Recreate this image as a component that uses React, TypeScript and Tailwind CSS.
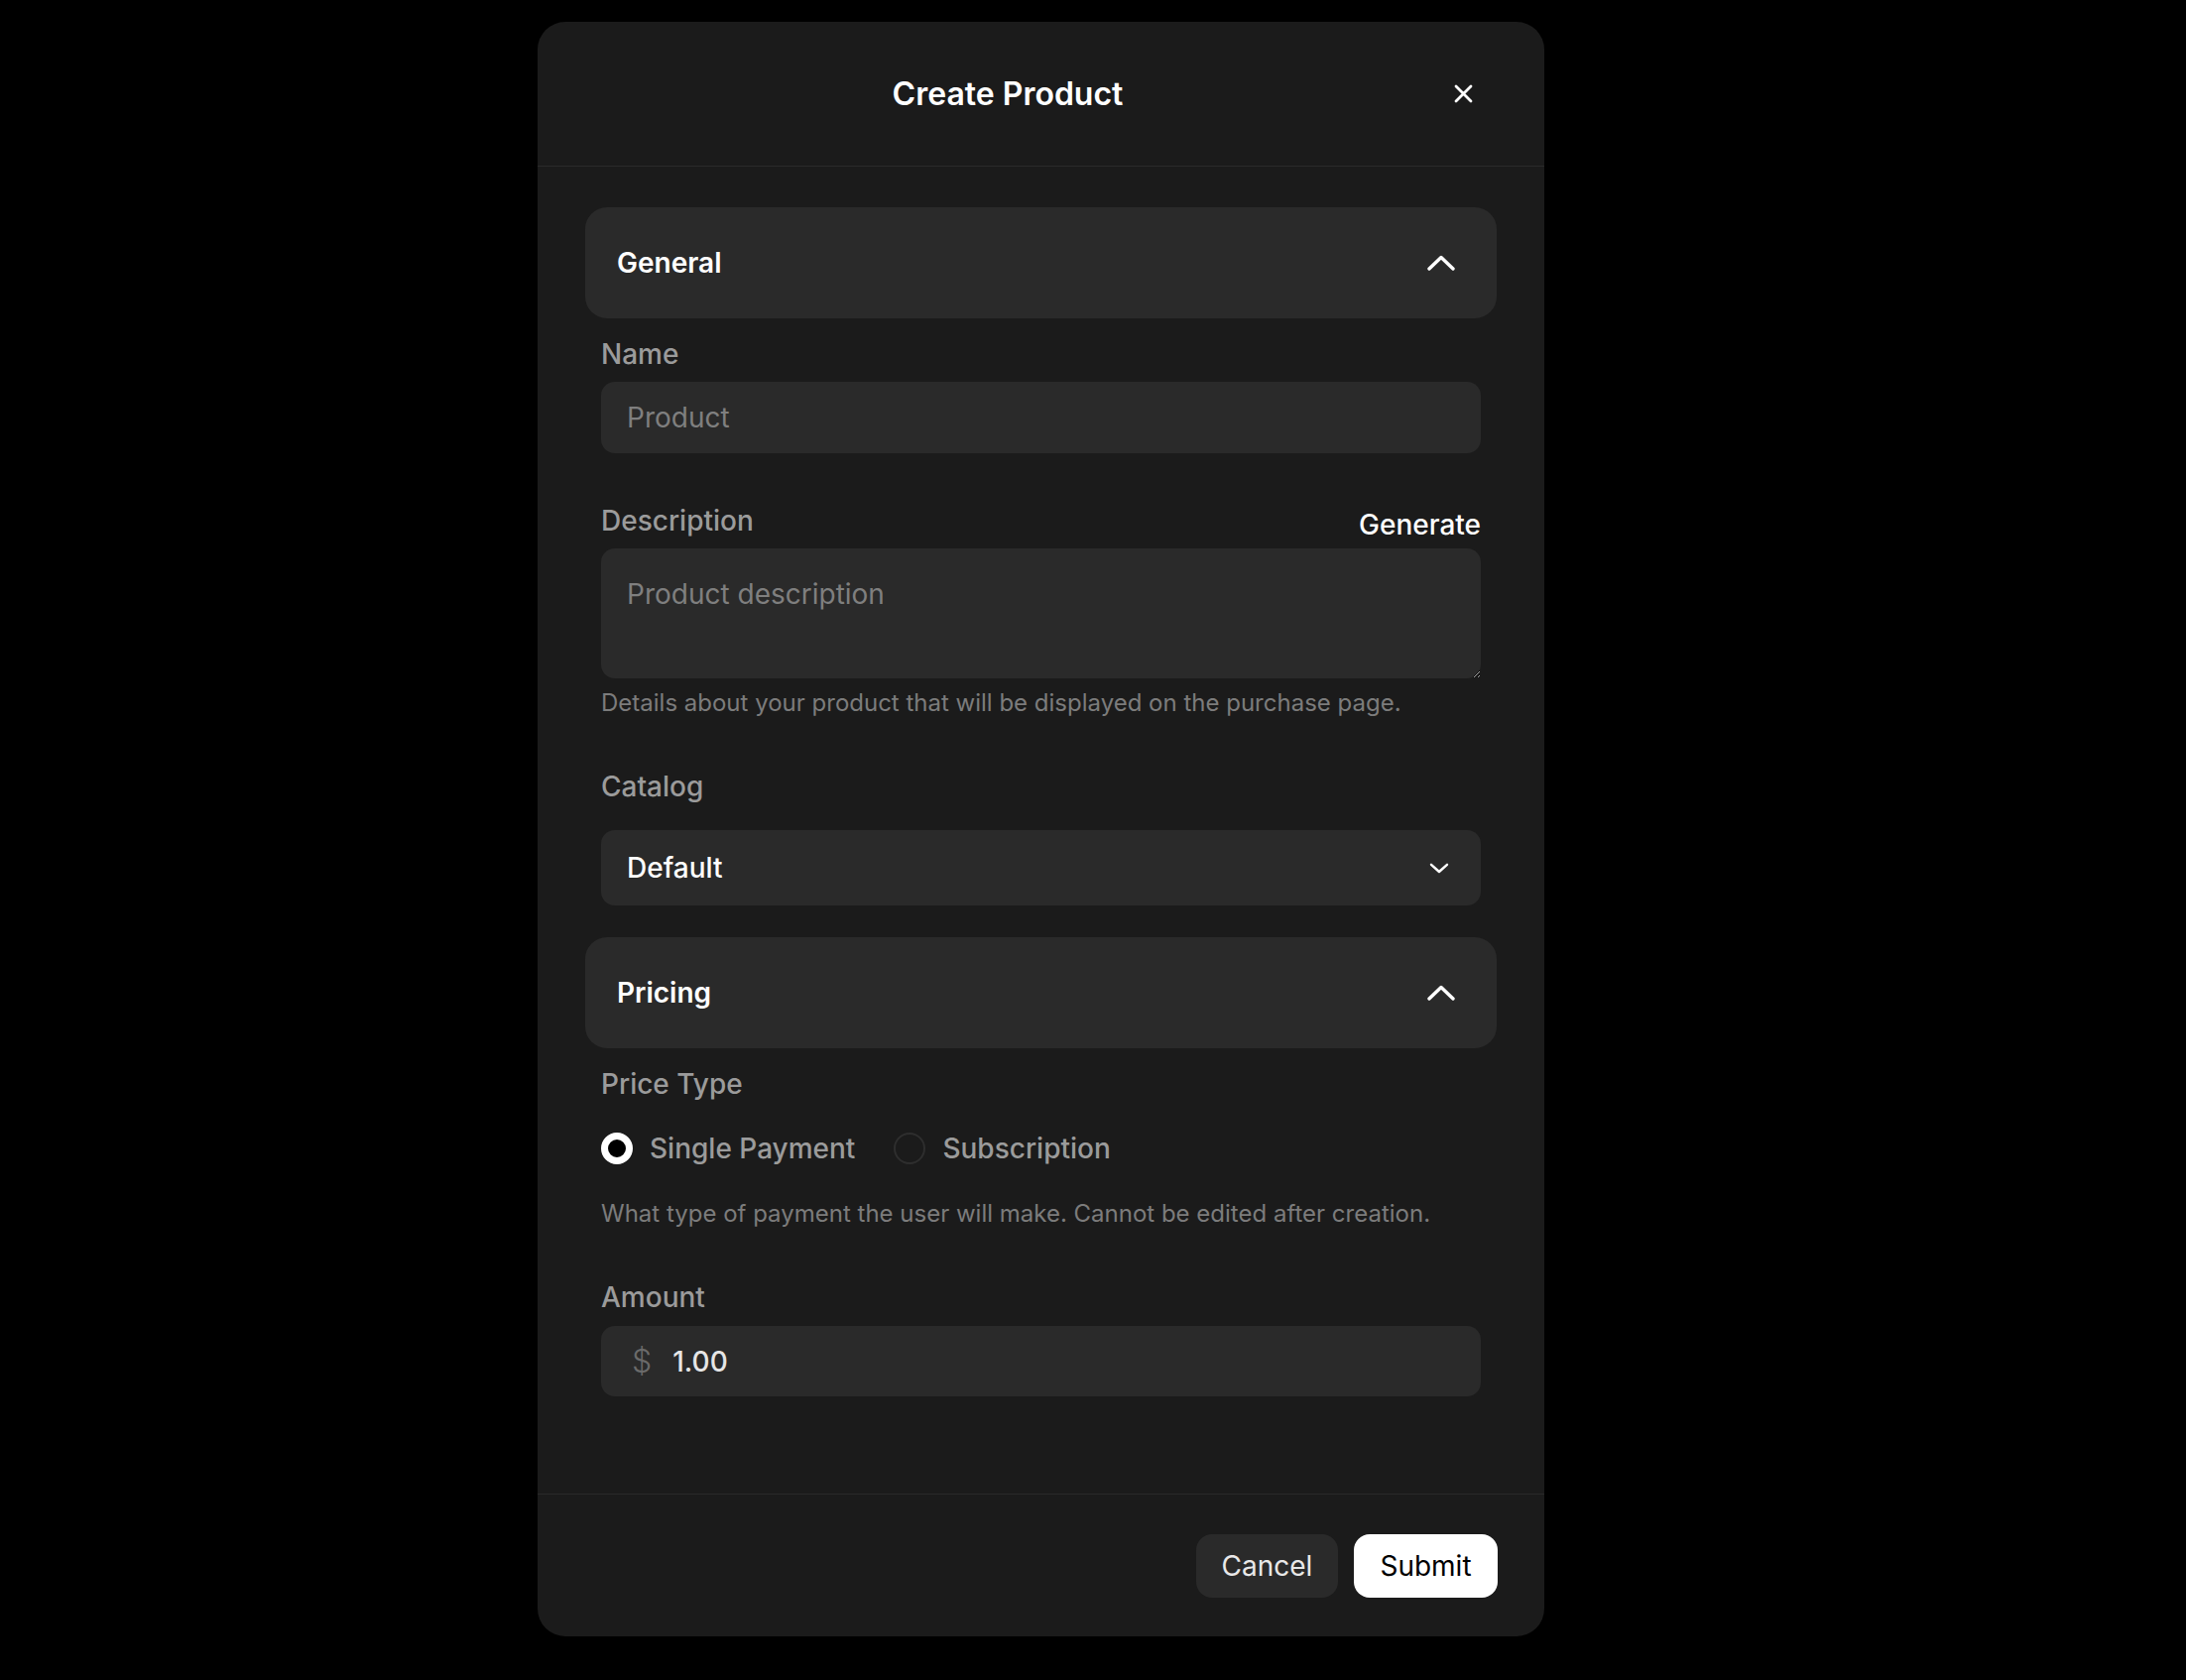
import { useState } from 'react';

const ChevronUp = () => (
  <svg width="28" height="16" viewBox="0 0 28 16" fill="none">
    <polyline points="2,14 14,2.5 26,14" stroke="white" strokeWidth="3.4" strokeLinecap="round" strokeLinejoin="round" />
  </svg>
);

const SectionHeader = ({ title }: { title: string }) => (
  <button className="w-full h-[112px] flex items-center justify-between rounded-[22px] bg-[#2a2a2a] pl-[32px] pr-[42px]">
    <span className="text-[28px] font-semibold text-white">{title}</span>
    <ChevronUp />
  </button>
);

const Label = ({ children }: { children: React.ReactNode }) => (
  <label className="block text-[28px] leading-[36px] font-medium text-[#9b9b9b]">{children}</label>
);

const Hint = ({ children, className }: { children: React.ReactNode; className?: string }) => (
  <p className={`text-[24px] leading-[32px] text-[#7c7c7c] ${className ?? ''}`}>{children}</p>
);

const Radio = ({ checked, label, onClick }: { checked: boolean; label: string; onClick: () => void }) => (
  <button onClick={onClick} className="flex items-center gap-[17px] h-[36px]">
    {checked ? (
      <span className="w-[32px] h-[32px] rounded-full border-[7px] border-white bg-black" />
    ) : (
      <span className="w-[32px] h-[32px] rounded-full border-2 border-[#2e2e2e]" />
    )}
    <span className="text-[28px] font-medium text-[#9b9b9b]">{label}</span>
  </button>
);

const App: React.FC = () => {
  const [priceType, setPriceType] = useState<'single' | 'sub'>('single');

  return (
    <div className="min-h-screen bg-black pl-[542px] pt-[22px] font-['Inter',sans-serif]">
      <div className="w-[1015px] h-[1628px] bg-[#1b1b1b] rounded-[28px] flex flex-col overflow-hidden">
        {/* header */}
        <div className="h-[146px] flex items-center border-b border-[#2a2a2a] pl-[33px] pr-[64px]">
          <h2 className="flex-1 text-center text-[32px] font-semibold text-white">Create Product</h2>
          <button className="w-[36px] h-[36px] flex items-center justify-center">
            <svg width="19" height="19" viewBox="0 0 19 19" fill="none">
              <path d="M2 2L17 17M17 2L2 17" stroke="white" strokeWidth="2.8" strokeLinecap="round" />
            </svg>
          </button>
        </div>

        {/* body */}
        <div className="flex-1 px-[48px] pt-[41px]">
          <SectionHeader title="General" />
          <div className="px-[16px]">
            <div className="mt-[18px]">
              <Label>Name</Label>
              <input
                placeholder="Product"
                className="mt-[10px] w-full h-[72px] rounded-[14px] bg-[#2a2a2a] px-[26px] text-[28px] text-white placeholder:text-[#7f7f7f] outline-none"
              />
            </div>
            <div className="mt-[50px]">
              <div className="h-[36px] flex items-start justify-between">
                <Label>Description</Label>
                <button className="mt-[4px] text-[28px] leading-[36px] font-medium text-white">Generate</button>
              </div>
              <textarea
                placeholder="Product description"
                className="mt-[10px] block w-full h-[131px] rounded-[14px] bg-[#2a2a2a] px-[26px] pt-[28px] text-[28px] leading-[36px] text-white placeholder:text-[#7f7f7f] outline-none [color-scheme:dark]"
              />
              <Hint className="mt-[9px]">Details about your product that will be displayed on the purchase page.</Hint>
            </div>
            <div className="mt-[50px]">
              <Label>Catalog</Label>
              <button className="mt-[26px] w-full h-[76px] rounded-[14px] bg-[#2a2a2a] pl-[26px] pr-[32px] flex items-center justify-between">
                <span className="text-[28px] font-medium text-white">Default</span>
                <svg width="20" height="11" viewBox="0 0 20 11" fill="none">
                  <polyline points="2,1.8 10,9 18,1.8" stroke="white" strokeWidth="2.4" strokeLinecap="round" strokeLinejoin="round" />
                </svg>
              </button>
            </div>
          </div>

          <div className="mt-[32px]">
            <SectionHeader title="Pricing" />
          </div>
          <div className="px-[16px]">
            <div className="mt-[18px]">
              <Label>Price Type</Label>
              <div className="mt-[29px] flex items-center gap-[39px]">
                <Radio checked={priceType === 'single'} label="Single Payment" onClick={() => setPriceType('single')} />
                <Radio checked={priceType === 'sub'} label="Subscription" onClick={() => setPriceType('sub')} />
              </div>
              <Hint className="mt-[32px]">What type of payment the user will make. Cannot be edited after creation.</Hint>
            </div>
            <div className="mt-[50px]">
              <Label>Amount</Label>
              <div className="mt-[11px] w-full h-[71px] rounded-[14px] bg-[#2a2a2a] pl-[31px] flex items-center gap-[21px]">
                <span className="text-[32px] font-light text-[#6b6b6b]">$</span>
                <span className="text-[28px] font-medium text-[#e6e6e6]">1.00</span>
              </div>
            </div>
          </div>
        </div>

        {/* footer */}
        <div className="h-[144px] border-t border-[#2a2a2a] flex items-center justify-end gap-[16px] pr-[47px]">
          <button className="h-[64px] w-[143px] rounded-[16px] bg-[#2a2a2a] text-[28px] text-[#e8e8e8]">Cancel</button>
          <button className="h-[64px] w-[145px] rounded-[16px] bg-white text-[28px] text-black">Submit</button>
        </div>
      </div>
    </div>
  );
};

export default App;
